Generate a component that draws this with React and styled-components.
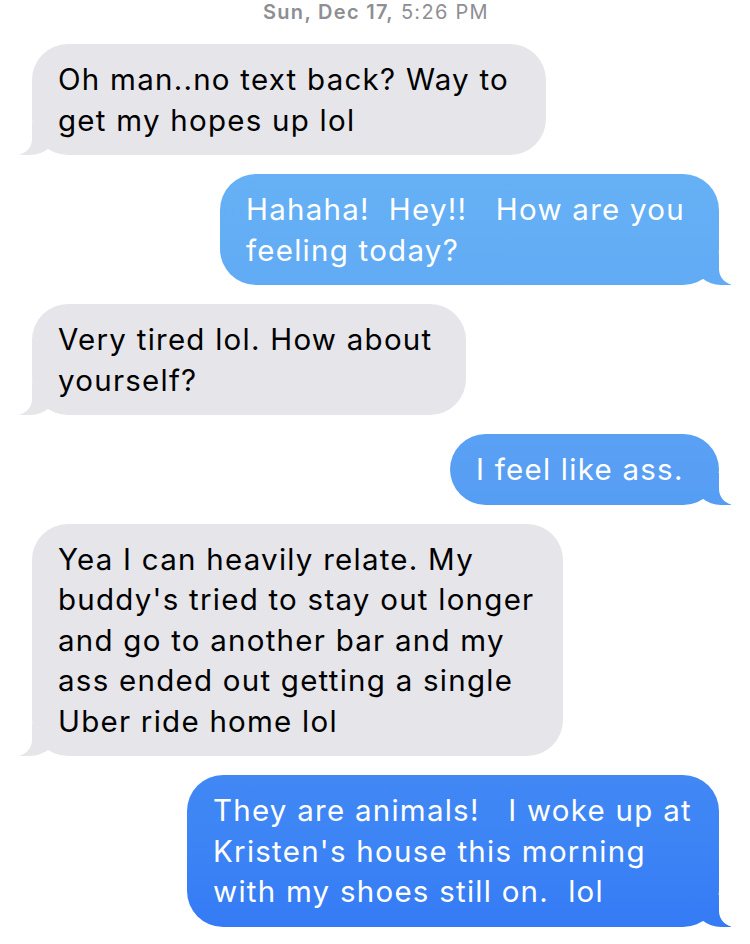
import React from "react";
import styled, { createGlobalStyle, css } from "styled-components";

const Global = createGlobalStyle`
  html, body { margin: 0; padding: 0; background: #ffffff; }
  body { overflow: hidden; font-family: Inter, "Noto Sans", "Liberation Sans", sans-serif; -webkit-font-smoothing: antialiased; }
`;

const Screen = styled.div`
  width: 750px;
  height: 944px;
  display: flex;
  flex-direction: column;
  background: #ffffff;
  overflow: hidden;
`;

const Stamp = styled.div`
  text-align: center;
  font-size: 20px;
  line-height: 24px;
  letter-spacing: 1.3px;
  color: #8e8e93;
  height: 44px;
  box-sizing: border-box;
  padding-left: 2px;
  b { font-weight: 600; }
  span { font-weight: 400; }
`;

const Thread = styled.div`
  display: flex;
  flex-direction: column;
  gap: 19px;
  padding: 0 31px 0 32px;
`;

const BLUE = `linear-gradient(to bottom, #6cb6f7 0px, #64aef5 230px, #589ff4 470px, #4a91f5 650px, #3c83f5 850px, #3379f5 944px) fixed`;

const Bubble = styled.div`
  position: relative;
  box-sizing: border-box;
  width: ${(p) => p.$w}px;
  padding: 15px 20px 15px 26px;
  border-radius: 36px;
  font-size: 29.5px;
  line-height: 40.5px;
  letter-spacing: 1.25px;
  white-space: nowrap;
  ${(p) =>
    p.$mine
      ? css`
          align-self: flex-end;
          background: ${BLUE};
          color: #ffffff;
          &::before {
            content: "";
            position: absolute;
            bottom: 0;
            right: -12px;
            width: 36px;
            height: 32px;
            background: inherit;
            border-bottom-left-radius: 26px 22px;
          }
          &::after {
            content: "";
            position: absolute;
            bottom: 0;
            right: -26px;
            width: 26px;
            height: 34px;
            background: #ffffff;
            border-bottom-left-radius: 16px;
          }
        `
      : css`
          align-self: flex-start;
          background: #e5e5ea;
          color: #000000;
          &::before {
            content: "";
            position: absolute;
            bottom: 0;
            left: -12px;
            width: 36px;
            height: 32px;
            background: inherit;
            border-bottom-right-radius: 26px 22px;
          }
          &::after {
            content: "";
            position: absolute;
            bottom: 0;
            left: -26px;
            width: 26px;
            height: 34px;
            background: #ffffff;
            border-bottom-right-radius: 16px;
          }
        `}
`;

const Line = styled.div`
  white-space: pre;
`;

const messages = [
  { mine: false, w: 514, lines: ["Oh man..no text back? Way to", "get my hopes up lol"] },
  { mine: true, w: 499, lines: ["Hahaha!  Hey!!   How are you", "feeling today?"] },
  { mine: false, w: 434, lines: ["Very tired lol. How about", "yourself?"] },
  { mine: true, w: 269, lines: ["I feel like ass."] },
  {
    mine: false,
    w: 531,
    lines: [
      "Yea I can heavily relate. My",
      "buddy's tried to stay out longer",
      "and go to another bar and my",
      "ass ended out getting a single",
      "Uber ride home lol",
    ],
  },
  {
    mine: true,
    w: 532,
    lines: ["They are animals!   I woke up at", "Kristen's house this morning", "with my shoes still on.  lol"],
  },
];

export default function App() {
  return (
    <Screen>
      <Global />
      <Stamp>
        <b>Sun, Dec 17,</b> <span>5:26 PM</span>
      </Stamp>
      <Thread>
        {messages.map((m, i) => (
          <Bubble key={i} $mine={m.mine} $w={m.w}>
            {m.lines.map((l, j) => (
              <Line key={j}>{l}</Line>
            ))}
          </Bubble>
        ))}
      </Thread>
    </Screen>
  );
}
